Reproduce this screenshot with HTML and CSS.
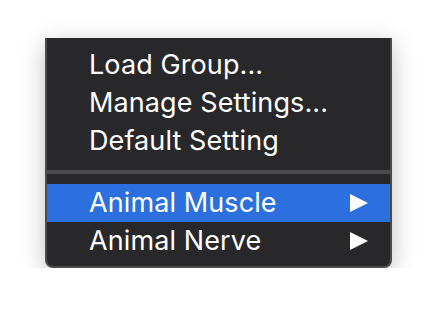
FILE: index.html
```html
<!DOCTYPE html>
<html lang="en">
<head>
    <meta charset="UTF-8">
    <title>Menu</title>
    <link rel="stylesheet" href="styles.css">
</head>
<body>
    <div class="stage">
        <div class="menu">
            <div class="item">Load Group...</div>
            <div class="item">Manage Settings...</div>
            <div class="item">Default Setting</div>
            <div class="separator"></div>
            <div class="item submenu selected">
                <span>Animal Muscle</span>
                <svg class="arrow" width="18" height="18" viewBox="0 0 18 18"><polygon points="0,0 18,9 0,18" fill="#fff"/></svg>
            </div>
            <div class="item submenu">
                <span>Animal Nerve</span>
                <svg class="arrow" width="18" height="18" viewBox="0 0 18 18"><polygon points="0,0 18,9 0,18" fill="#fff"/></svg>
            </div>
        </div>
    </div>
</body>
</html>
```

FILE: styles.css
```css
:root {
    --menu-bg: #28282a;
    --menu-border: #4b4b4c;
    --selected: #2b70de;
    --text: #ffffff;
}

body {
    margin: 0;
    background: #ffffff;
    font-family: Inter, "Liberation Sans", sans-serif;
}

.stage {
    padding: 38px 0 0 45px;
}

.menu {
    width: 343px;
    padding: 8px 0 6px;
    background: var(--menu-bg);
    border: 2px solid var(--menu-border);
    border-top: none;
    border-radius: 0 0 8px 8px;
    box-shadow: 0 6px 24px rgba(0, 0, 0, 0.25);
}

.item {
    height: 38px;
    line-height: 38px;
    padding: 0 22px 0 42px;
    color: var(--text);
    font-size: 27px;
    letter-spacing: 0.1px;
    display: flex;
    align-items: center;
    justify-content: space-between;
}

.selected {
    background: var(--selected);
}

.separator {
    height: 4px;
    margin: 10px 0;
    background: var(--menu-border);
}

.arrow {
    display: block;
}
```
